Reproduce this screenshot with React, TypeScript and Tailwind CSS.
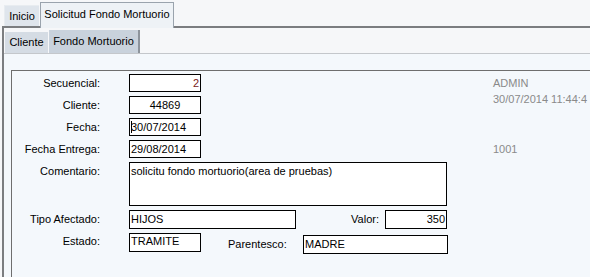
import React from 'react';

// form screen: Solicitud Fondo Mortuorio

const font = { fontFamily: '"Liberation Sans", Arial, sans-serif' };

function Label({ text, className = '' }: { text: string; className?: string }) {
  return <div className={`w-[88px] text-right text-[11px] text-black ${className}`}>{text}</div>;
}

export default function App() {
  return (
    <div className="w-[590px] h-[277px] overflow-hidden bg-[#f6f7f9] flex flex-col text-[11px] text-black" style={font}>
      {/* outer tabs */}
      <div className="h-[26px] flex items-end pl-[4px] shrink-0">
        <div className="h-[21px] w-[35px] flex items-center justify-center bg-[#dfe5ec] border-t border-l border-[#e8ecf0]">Inicio</div>
        <div className="h-[26px] w-[134px] ml-[1px] flex items-center justify-center whitespace-nowrap bg-[#eef2f6] border border-b-0 border-[#9aa3ad] relative -mb-[2px] z-10 pb-[2px]">
          Solicitud Fondo Mortuorio
        </div>
      </div>

      {/* outer panel */}
      <div className="flex-1 ml-[2px] border-l-2 border-t-2 border-[#7b7d80] flex flex-col">
        {/* inner tabs */}
        <div className="h-[26px] flex items-end pl-[1px] border-b border-[#c4c7cb] bg-[#f6f7f9] shrink-0">
          <div className="h-[21px] w-[43px] flex items-center justify-center bg-[#d5dce4]">Cliente</div>
          <div className="h-[23px] w-[91px] ml-[1px] flex items-center justify-center whitespace-nowrap bg-[#c9d2dc] border-r-2 border-[#8d949c]">Fondo Mortuorio</div>
        </div>

        {/* content */}
        <div className="flex-1 bg-[#f4f8fc] pt-[16px] pl-[7px]">
          <div className="h-full border-l border-t border-[#6e6e6e] flex pt-[3px]">
            <div className="w-[480px] flex flex-col gap-[4px]">
              <div className="flex items-center">
                <Label text="Secuencial:" />
                <div className="ml-[29px] w-[72px] h-[18px] border border-black bg-white text-right pr-[1px] leading-[16px] text-[#7a1a1a]">2</div>
              </div>
              <div className="flex items-center">
                <Label text="Cliente:" />
                <div className="ml-[29px] w-[72px] h-[18px] border border-black bg-white text-center leading-[16px]">44869</div>
              </div>
              <div className="flex items-center">
                <Label text="Fecha:" />
                <div className="ml-[29px] w-[72px] h-[18px] border border-black bg-white pl-[1px] leading-[16px] flex items-center">
                  <span className="w-px h-[12px] bg-black mr-[-1px]" />
                  30/07/2014
                </div>
              </div>
              <div className="flex items-center">
                <Label text="Fecha Entrega:" />
                <div className="ml-[29px] w-[72px] h-[18px] border border-black bg-white pl-[1px] leading-[16px]">29/08/2014</div>
              </div>
              <div className="flex items-start">
                <Label text="Comentario:" className="mt-[1px]" />
                <div className="ml-[29px] w-[318px] h-[44px] border border-black bg-white pl-[1px] pt-[1px] leading-[14px]">
                  solicitu fondo mortuorio(area de pruebas)
                </div>
              </div>
              <div className="flex items-center">
                <Label text="Tipo Afectado:" />
                <div className="ml-[29px] w-[167px] h-[19px] border border-black bg-white pl-[1px] leading-[16px]">HIJOS</div>
                <div className="w-[83px] text-right">Valor:</div>
                <div className="ml-[6px] w-[62px] h-[19px] border border-black bg-white text-right pr-[1px] leading-[17px]">350</div>
              </div>
              <div className="flex items-start">
                <Label text="Estado:" className="mt-[0px]" />
                <div className="ml-[29px] w-[72px] h-[19px] border border-black bg-white pl-[1px] leading-[15px]">TRAMITE</div>
                <div className="ml-[27px] mt-[3px] w-[68px]">Parentesco:</div>
                <div className="ml-[7px] mt-[2px] w-[145px] h-[19px] border border-black bg-white pl-[1px] leading-[16px]">MADRE</div>
              </div>
            </div>
            <div className="pl-[1px] pt-[1px] text-[#8a8a8a] whitespace-nowrap leading-[16px]">
              <div>ADMIN</div>
              <div>30/07/2014 11:44:4</div>
              <div className="mt-[34px]">1001</div>
            </div>
          </div>
        </div>
      </div>
    </div>
  );
}
